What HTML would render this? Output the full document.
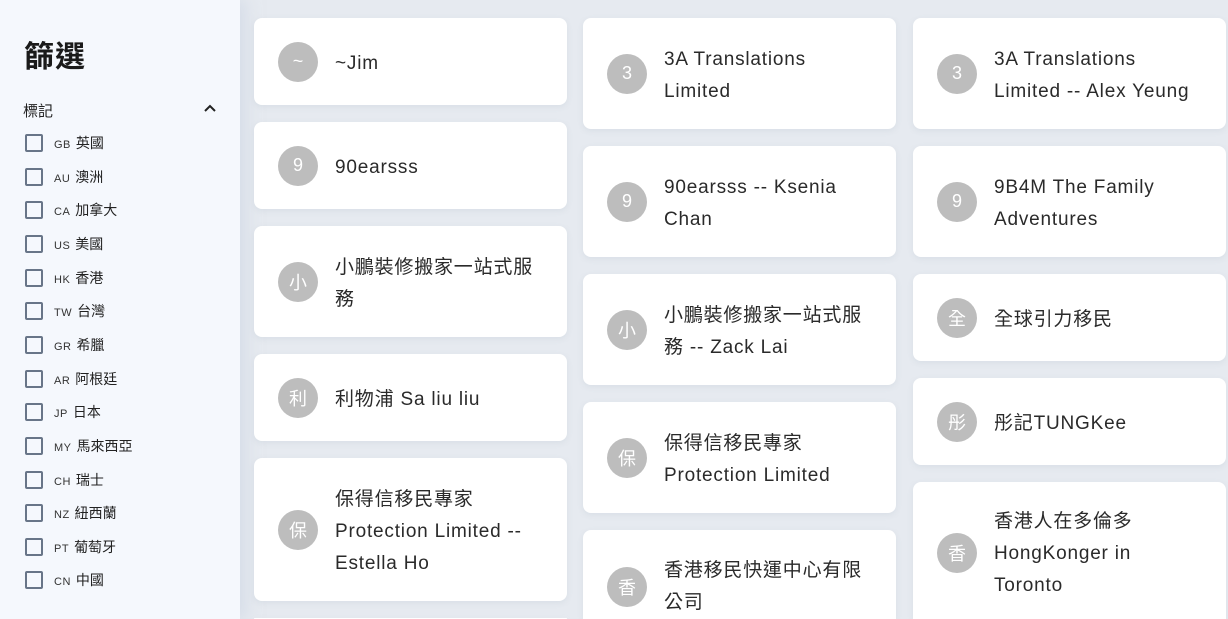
<!DOCTYPE html>
<html><head><meta charset="utf-8"><style>
*{margin:0;padding:0;box-sizing:border-box}
html{width:1228px;height:619px;overflow:hidden}
body{width:1228px;height:619px;overflow:hidden;background:#e6eaf0;font-family:"Liberation Sans","Noto Sans CJK TC",sans-serif;color:#222;position:relative}
.side{position:absolute;left:0;top:0;width:240px;height:619px;background:#f5f8fd;box-shadow:6px 0 14px rgba(200,210,225,.5)}
.side h1{position:absolute;left:24px;top:32px;font-size:30px;font-weight:bold;color:#1a1a1a;letter-spacing:1px}
.lab{position:absolute;left:23px;top:100px;font-size:15px}
.chev{position:absolute;left:203px;top:103px}
.it{position:absolute;left:25px;height:18px;font-size:14px;display:flex;align-items:center}
.cb{width:18px;height:18px;border:2px solid #687588;border-radius:2px;margin-right:11px}
.it small{font-size:11px;margin-right:5px;margin-top:3px;color:#333;letter-spacing:.5px}
.card{position:absolute;background:#fff;border-radius:8px;box-shadow:0 2px 6px rgba(180,190,205,.25);display:flex;align-items:center;padding-left:24px;width:313px;overflow:hidden}
.av{width:40px;height:40px;border-radius:50%;background:#bdbdbd;color:#fff;font-size:18px;display:flex;align-items:center;justify-content:center;flex:none;margin-right:17px}
.t{font-size:19px;line-height:32px;color:#2a2a2a;width:210px;letter-spacing:.8px;position:relative;top:2px}
</style></head><body>
<div class="side">
<h1>篩選</h1>
<div class="lab">標記</div>
<svg class="chev" width="14" height="10" viewBox="0 0 14 10"><path d="M2 8 L7 3 L12 8" fill="none" stroke="#222" stroke-width="2"/></svg>
<div class="it" style="top:134px"><div class="cb"></div><small>GB</small>英國</div>
<div class="it" style="top:168px"><div class="cb"></div><small>AU</small>澳洲</div>
<div class="it" style="top:201px"><div class="cb"></div><small>CA</small>加拿大</div>
<div class="it" style="top:235px"><div class="cb"></div><small>US</small>美國</div>
<div class="it" style="top:269px"><div class="cb"></div><small>HK</small>香港</div>
<div class="it" style="top:302px"><div class="cb"></div><small>TW</small>台灣</div>
<div class="it" style="top:336px"><div class="cb"></div><small>GR</small>希臘</div>
<div class="it" style="top:370px"><div class="cb"></div><small>AR</small>阿根廷</div>
<div class="it" style="top:403px"><div class="cb"></div><small>JP</small>日本</div>
<div class="it" style="top:437px"><div class="cb"></div><small>MY</small>馬來西亞</div>
<div class="it" style="top:471px"><div class="cb"></div><small>CH</small>瑞士</div>
<div class="it" style="top:504px"><div class="cb"></div><small>NZ</small>紐西蘭</div>
<div class="it" style="top:538px"><div class="cb"></div><small>PT</small>葡萄牙</div>
<div class="it" style="top:571px"><div class="cb"></div><small>CN</small>中國</div>
</div>

<div class="card" style="left:254px;top:18px;height:87px"><div class="av">~</div><div class="t">~Jim</div></div>
<div class="card" style="left:254px;top:122px;height:87px"><div class="av">9</div><div class="t">90earsss</div></div>
<div class="card" style="left:254px;top:226px;height:111px"><div class="av">小</div><div class="t">小鵬裝修搬家一站式服務</div></div>
<div class="card" style="left:254px;top:354px;height:87px"><div class="av">利</div><div class="t">利物浦 Sa liu liu</div></div>
<div class="card" style="left:254px;top:458px;height:143px"><div class="av">保</div><div class="t">保得信移民專家 Protection Limited -- Estella Ho</div></div>
<div class="card" style="left:254px;top:618px;height:1px"></div>

<div class="card" style="left:583px;top:18px;height:111px"><div class="av">3</div><div class="t">3A Translations Limited</div></div>
<div class="card" style="left:583px;top:146px;height:111px"><div class="av">9</div><div class="t">90earsss -- Ksenia Chan</div></div>
<div class="card" style="left:583px;top:274px;height:111px"><div class="av">小</div><div class="t">小鵬裝修搬家一站式服務 -- Zack Lai</div></div>
<div class="card" style="left:583px;top:402px;height:111px"><div class="av">保</div><div class="t">保得信移民專家 Protection Limited</div></div>
<div class="card" style="left:583px;top:530px;height:89px;align-items:flex-start;padding-top:37px;border-radius:8px 8px 0 0"><div class="av">香</div><div class="t" style="top:-12px">香港移民快運中心有限公司</div></div>

<div class="card" style="left:913px;top:18px;height:111px"><div class="av">3</div><div class="t">3A Translations Limited -- Alex Yeung</div></div>
<div class="card" style="left:913px;top:146px;height:111px"><div class="av">9</div><div class="t">9B4M The Family Adventures</div></div>
<div class="card" style="left:913px;top:274px;height:87px"><div class="av">全</div><div class="t">全球引力移民</div></div>
<div class="card" style="left:913px;top:378px;height:87px"><div class="av">彤</div><div class="t">彤記TUNGKee</div></div>
<div class="card" style="left:913px;top:482px;height:137px;align-items:flex-start;padding-top:51px;border-radius:8px 8px 0 0"><div class="av">香</div><div class="t" style="top:-27px">香港人在多倫多 HongKonger in Toronto</div></div>
</body></html>
